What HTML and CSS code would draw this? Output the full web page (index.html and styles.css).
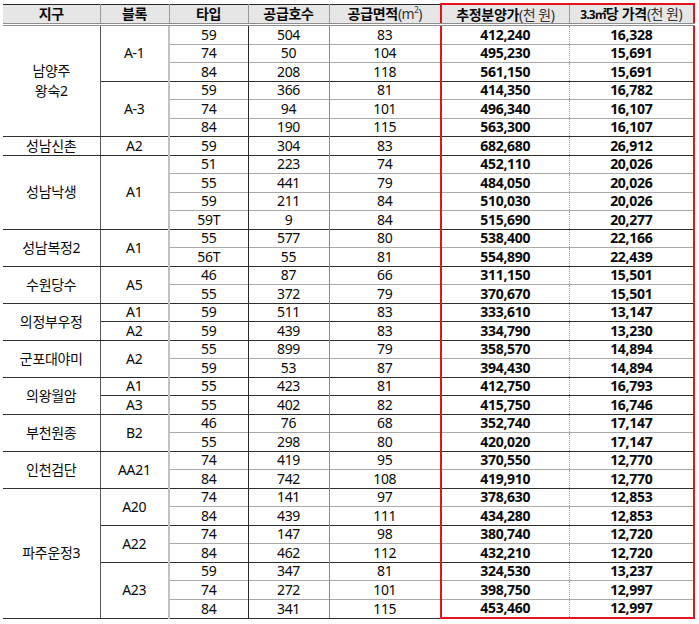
FILE: index.html
```html
<!DOCTYPE html>
<html lang="ko">
<head>
<meta charset="utf-8">
<title>추정분양가</title>
<link rel="stylesheet" href="styles.css">
</head>
<body>
<table class="t">
<colgroup>
<col class="c1"><col class="c2"><col class="c3"><col class="c4"><col class="c5"><col class="c6"><col class="c7">
</colgroup>
<thead>
<tr>
<th class="h1">지구</th><th class="h2">블록</th><th class="h3">타입</th><th class="h4">공급호수</th><th class="h5">공급면적<span class="n">(m<sup>2</sup>)</span></th><th class="h6">추정분양가<span class="n">(천 원)</span></th><th class="h7"><span class="nar">3.3㎡</span>당 가격<span class="n">(천 원)</span></th>
</tr>
</thead>
<tbody>
<tr class="g"><td class="d two" rowspan="6">남양주<br>왕숙2</td><td class="b" rowspan="3">A-1</td><td class="x3">59</td><td class="x4">504</td><td class="x5">83</td><td class="x6">412,240</td><td class="x7">16,328</td></tr>
<tr><td class="x3">74</td><td class="x4">50</td><td class="x5">104</td><td class="x6">495,230</td><td class="x7">15,691</td></tr>
<tr><td class="x3">84</td><td class="x4">208</td><td class="x5">118</td><td class="x6">561,150</td><td class="x7">15,691</td></tr>
<tr class="g"><td class="b" rowspan="3">A-3</td><td class="x3">59</td><td class="x4">366</td><td class="x5">81</td><td class="x6">414,350</td><td class="x7">16,782</td></tr>
<tr><td class="x3">74</td><td class="x4">94</td><td class="x5">101</td><td class="x6">496,340</td><td class="x7">16,107</td></tr>
<tr><td class="x3">84</td><td class="x4">190</td><td class="x5">115</td><td class="x6">563,300</td><td class="x7">16,107</td></tr>

<tr class="g"><td class="d">성남신촌</td><td class="b">A2</td><td class="x3">59</td><td class="x4">304</td><td class="x5">83</td><td class="x6">682,680</td><td class="x7">26,912</td></tr>

<tr class="g"><td class="d" rowspan="4">성남낙생</td><td class="b" rowspan="4">A1</td><td class="x3">51</td><td class="x4">223</td><td class="x5">74</td><td class="x6">452,110</td><td class="x7">20,026</td></tr>
<tr><td class="x3">55</td><td class="x4">441</td><td class="x5">79</td><td class="x6">484,050</td><td class="x7">20,026</td></tr>
<tr><td class="x3">59</td><td class="x4">211</td><td class="x5">84</td><td class="x6">510,030</td><td class="x7">20,026</td></tr>
<tr><td class="x3">59T</td><td class="x4">9</td><td class="x5">84</td><td class="x6">515,690</td><td class="x7">20,277</td></tr>

<tr class="g"><td class="d" rowspan="2">성남복정2</td><td class="b" rowspan="2">A1</td><td class="x3">55</td><td class="x4">577</td><td class="x5">80</td><td class="x6">538,400</td><td class="x7">22,166</td></tr>
<tr><td class="x3">56T</td><td class="x4">55</td><td class="x5">81</td><td class="x6">554,890</td><td class="x7">22,439</td></tr>

<tr class="g"><td class="d" rowspan="2">수원당수</td><td class="b" rowspan="2">A5</td><td class="x3">46</td><td class="x4">87</td><td class="x5">66</td><td class="x6">311,150</td><td class="x7">15,501</td></tr>
<tr><td class="x3">55</td><td class="x4">372</td><td class="x5">79</td><td class="x6">370,670</td><td class="x7">15,501</td></tr>

<tr class="g"><td class="d" rowspan="2">의정부우정</td><td class="b">A1</td><td class="x3">59</td><td class="x4">511</td><td class="x5">83</td><td class="x6">333,610</td><td class="x7">13,147</td></tr>
<tr class="g"><td class="b">A2</td><td class="x3">59</td><td class="x4">439</td><td class="x5">83</td><td class="x6">334,790</td><td class="x7">13,230</td></tr>

<tr class="g"><td class="d" rowspan="2">군포대야미</td><td class="b" rowspan="2">A2</td><td class="x3">55</td><td class="x4">899</td><td class="x5">79</td><td class="x6">358,570</td><td class="x7">14,894</td></tr>
<tr><td class="x3">59</td><td class="x4">53</td><td class="x5">87</td><td class="x6">394,430</td><td class="x7">14,894</td></tr>

<tr class="g"><td class="d" rowspan="2">의왕월암</td><td class="b">A1</td><td class="x3">55</td><td class="x4">423</td><td class="x5">81</td><td class="x6">412,750</td><td class="x7">16,793</td></tr>
<tr class="g"><td class="b">A3</td><td class="x3">55</td><td class="x4">402</td><td class="x5">82</td><td class="x6">415,750</td><td class="x7">16,746</td></tr>

<tr class="g"><td class="d" rowspan="2">부천원종</td><td class="b" rowspan="2">B2</td><td class="x3">46</td><td class="x4">76</td><td class="x5">68</td><td class="x6">352,740</td><td class="x7">17,147</td></tr>
<tr><td class="x3">55</td><td class="x4">298</td><td class="x5">80</td><td class="x6">420,020</td><td class="x7">17,147</td></tr>

<tr class="g"><td class="d" rowspan="2">인천검단</td><td class="b" rowspan="2">AA21</td><td class="x3">74</td><td class="x4">419</td><td class="x5">95</td><td class="x6">370,550</td><td class="x7">12,770</td></tr>
<tr><td class="x3">84</td><td class="x4">742</td><td class="x5">108</td><td class="x6">419,910</td><td class="x7">12,770</td></tr>

<tr class="g"><td class="d" rowspan="7">파주운정3</td><td class="b" rowspan="2">A20</td><td class="x3">74</td><td class="x4">141</td><td class="x5">97</td><td class="x6">378,630</td><td class="x7">12,853</td></tr>
<tr><td class="x3">84</td><td class="x4">439</td><td class="x5">111</td><td class="x6">434,280</td><td class="x7">12,853</td></tr>
<tr class="g"><td class="b" rowspan="2">A22</td><td class="x3">74</td><td class="x4">147</td><td class="x5">98</td><td class="x6">380,740</td><td class="x7">12,720</td></tr>
<tr><td class="x3">84</td><td class="x4">462</td><td class="x5">112</td><td class="x6">432,210</td><td class="x7">12,720</td></tr>
<tr class="g"><td class="b" rowspan="3">A23</td><td class="x3">59</td><td class="x4">347</td><td class="x5">81</td><td class="x6">324,530</td><td class="x7">13,237</td></tr>
<tr><td class="x3">74</td><td class="x4">272</td><td class="x5">101</td><td class="x6">398,750</td><td class="x7">12,997</td></tr>
<tr class="last"><td class="x3">84</td><td class="x4">341</td><td class="x5">115</td><td class="x6">453,460</td><td class="x7">12,997</td></tr>
</tbody>
</table>
</body>
</html>
```
FILE: styles.css
```css
html, body {
  margin: 0;
  padding: 0;
  background: #ffffff;
}
body {
  padding: 3px 0 0 3px;
  font-family: "Noto Sans", "Noto Sans CJK KR", sans-serif;
  color: #0a0a0a;
}
.t {
  border-collapse: collapse;
  table-layout: fixed;
  width: 691px;
  font-size: 14px;
  letter-spacing: -0.3px;
}
.c1 { width: 97px; }
.c2 { width: 69px; }
.c3 { width: 79px; }
.c4 { width: 81px; }
.c5 { width: 112px; }
.c6 { width: 128px; }
.c7 { width: 125px; }

th, td {
  padding: 0;
  text-align: center;
  vertical-align: middle;
  white-space: nowrap;
  overflow: hidden;
}
th {
  height: 17px;
  line-height: 17px;
  background: #e6e6e6;
  font-weight: 700;
  font-size: 14px;
  border-top: 1px solid #2a2a2a;
  border-bottom: 3px double #8e8e8e;
  border-right: 1px solid #9a9a9a;
}
th .n {
  font-weight: 400;
  color: #333;
  letter-spacing: -0.5px;
}
th sup {
  font-size: 8px;
  line-height: 0;
  vertical-align: 6px;
}
.nar {
  font-size: 12px;
  letter-spacing: -0.9px;
}
.h5 { border-right: 2px solid #e3141c; }
.h6 { border-top: 2px solid #e3141c; border-right: 1px solid #9a9a9a; }
.h7 { border-top: 2px solid #e3141c; border-right: 2px solid #e3141c; }

td {
  height: 17.5px;
  line-height: 16px;
  border-top: 1px solid #a9a9a9;
}
tr.g td { border-top: 1px solid #2e2e2e; }
tr.last td { border-bottom: 1px solid #2e2e2e; }

.d {
  border-right: 1px solid #5a5a5a;
  border-bottom: 1px solid #2e2e2e;
}
.d.two { line-height: 20px; }
.b {
  border-right: 2px solid #c2c2c2;
  border-bottom: 1px solid #2e2e2e;
}
.x3 { border-right: 1px solid #2a2a2a; }
.x4 { border-right: 1px solid #8a8a8a; }
.x5 { border-right: 2px solid #e3141c; }
.x6 {
  font-weight: 700;
  border-right: 1px dotted #9a9a9a;
}
.x7 {
  font-weight: 700;
  border-right: 2px solid #e3141c;
}
tr.last .x6, tr.last .x7 { border-bottom: 2px solid #e3141c; }
```
